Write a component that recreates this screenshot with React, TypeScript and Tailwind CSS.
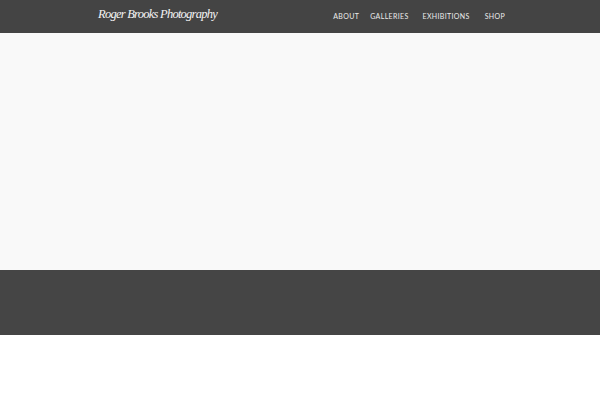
const nav = [
    { label: 'About', cls: '' },
    { label: 'Galleries', cls: 'ml-[11px]' },
    { label: 'Exhibitions', cls: 'ml-[14px]' },
    { label: 'Shop', cls: 'ml-[15px]' },
];

export default function App() {
    return (
        <div className="w-[600px] h-[400px] bg-white flex flex-col">
            {/* Header */}
            <header className="h-[33px] bg-[#444444] flex items-center">
                <div className="w-[407px] ml-[98px] flex items-center justify-between">
                    <span className="text-[12.5px] tracking-[-0.75px] italic text-[#f4f4f4] font-['Liberation_Serif',serif] -mt-[4px]">Roger Brooks Photography</span>
                    <nav className="flex items-center font-['Lato',sans-serif] text-[7px] uppercase tracking-[0.05em] text-[#ececec] -mt-[1px]">
                        {nav.map((n) => (
                            <a key={n.label} href="#" className={n.cls}>{n.label}</a>
                        ))}
                    </nav>
                </div>
            </header>

            {/* Hero */}
            <div className="h-[237px] bg-[#f9f9f9]"></div>

            {/* Footer */}
            <footer className="h-[65px] bg-[#454545]"></footer>
        </div>
    );
}
